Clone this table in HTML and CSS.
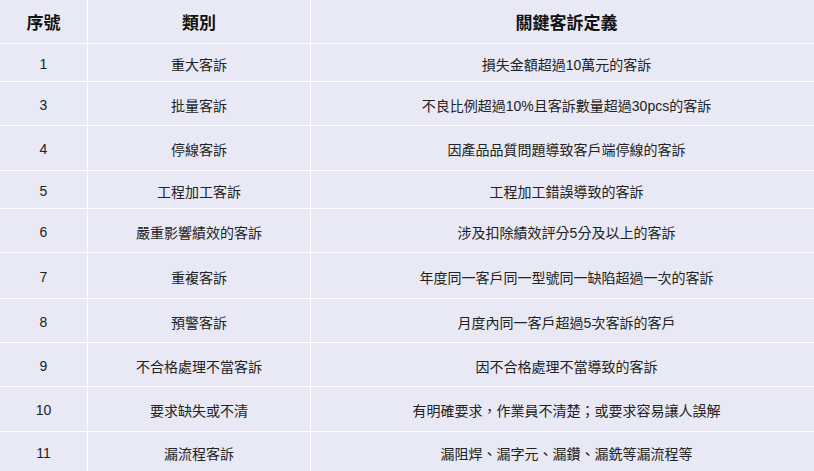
FILE: index.html
```html
<!DOCTYPE html>
<html lang="zh-Hant">
<head>
<meta charset="utf-8">
<title>關鍵客訴定義</title>
<link rel="stylesheet" href="styles.css">
</head>
<body>
<div class="table" role="table">
  <div class="cell head">序號</div>
  <div class="cell head">類別</div>
  <div class="cell head">關鍵客訴定義</div>

  <div class="cell">1</div>
  <div class="cell">重大客訴</div>
  <div class="cell">損失金額超過10萬元的客訴</div>

  <div class="cell">3</div>
  <div class="cell">批量客訴</div>
  <div class="cell">不良比例超過10%且客訴數量超過30pcs的客訴</div>

  <div class="cell">4</div>
  <div class="cell">停線客訴</div>
  <div class="cell">因產品品質問題導致客戶端停線的客訴</div>

  <div class="cell">5</div>
  <div class="cell">工程加工客訴</div>
  <div class="cell">工程加工錯誤導致的客訴</div>

  <div class="cell">6</div>
  <div class="cell">嚴重影響績效的客訴</div>
  <div class="cell">涉及扣除績效評分5分及以上的客訴</div>

  <div class="cell">7</div>
  <div class="cell">重複客訴</div>
  <div class="cell">年度同一客戶同一型號同一缺陷超過一次的客訴</div>

  <div class="cell">8</div>
  <div class="cell">預警客訴</div>
  <div class="cell">月度內同一客戶超過5次客訴的客戶</div>

  <div class="cell">9</div>
  <div class="cell">不合格處理不當客訴</div>
  <div class="cell">因不合格處理不當導致的客訴</div>

  <div class="cell">10</div>
  <div class="cell">要求缺失或不清</div>
  <div class="cell">有明確要求，作業員不清楚；或要求容易讓人誤解</div>

  <div class="cell">11</div>
  <div class="cell">漏流程客訴</div>
  <div class="cell">漏阻焊、漏字元、漏鑽、漏銑等漏流程等</div>
</div>
</body>
</html>
```
FILE: styles.css
```css
html, body {
  margin: 0;
  padding: 0;
  background: #e8e9f5;
  overflow: hidden;
}

.table {
  width: 822px;
  display: grid;
  grid-template-columns: 87px 222px 1fr;
  grid-template-rows: 43px 37px 43px 44px 37px 43px 45px 43px 43px 44px 40px;
  gap: 1px;
  background: #ffffff;
  font-family: "Liberation Sans", "Noto Sans CJK TC", sans-serif;
  font-size: 14px;
  color: #222222;
}

.cell {
  background: #e8e9f5;
  display: flex;
  align-items: center;
  justify-content: center;
  text-align: center;
  padding-top: 2px;
  box-sizing: border-box;
}

.head {
  font-size: 17px;
  font-weight: bold;
  color: #111111;
  padding-top: 0;
}
```
